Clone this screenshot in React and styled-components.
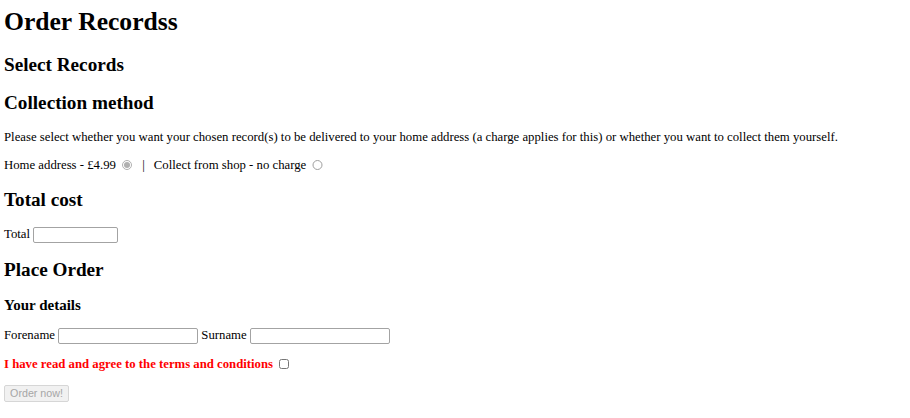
import * as React from 'react';
import styled, { createGlobalStyle } from 'styled-components';

const GlobalStyle = createGlobalStyle`
  body {
    margin: 0;
    background: #fff;
    color: #000;
    font-family: "Liberation Serif", "Times New Roman", serif;
  }
`;

function App() {
  const [method, setMethod] = React.useState('home');
  const [agreed, setAgreed] = React.useState(false);

  return (
    <>
      <GlobalStyle />
      <Page>
        <Title>Order Recordss</Title>
        <Heading>Select Records</Heading>

        <Heading>Collection method</Heading>
        <Text>
          Please select whether you want your chosen record(s) to be delivered to your home
          address (a charge applies for this) or whether you want to collect them yourself.
        </Text>
        <Text>
          Home address - £4.99
          <Radio
            name="collection"
            checked={method === 'home'}
            onChange={() => setMethod('home')}
          />
          <Divider>|</Divider>
          Collect from shop - no charge
          <Radio
            name="collection"
            checked={method === 'shop'}
            onChange={() => setMethod('shop')}
          />
        </Text>

        <Heading>Total cost</Heading>
        <FieldRow>
          Total <TextInput $width={85} readOnly />
        </FieldRow>

        <Heading>Place Order</Heading>
        <SubHeading>Your details</SubHeading>
        <FieldRow>
          Forename <TextInput $width={140} /> Surname <TextInput $width={140} />
        </FieldRow>
        <Terms>
          I have read and agree to the terms and conditions
          <Checkbox checked={agreed} onChange={(e) => setAgreed(e.target.checked)} />
        </Terms>
        <Text>
          <OrderButton disabled={!agreed}>Order now!</OrderButton>
        </Text>
      </Page>
    </>
  );
}

const Page = styled.div`
  display: flow-root;
  padding: 7px 4px 0;
`;

const Title = styled.h1`
  font-size: 25.6px;
  font-weight: bold;
  margin: 0 0 17px;
`;

const Heading = styled.h2`
  font-size: 19.2px;
  font-weight: bold;
  margin: 16px 0;
`;

const SubHeading = styled.h3`
  font-size: 15px;
  font-weight: bold;
  margin: 14px 0;
`;

const Text = styled.p`
  font-size: 12.75px;
  margin: 12.8px 0;
`;

const FieldRow = styled(Text)`
  line-height: 15px;
`;

const Terms = styled(Text)`
  color: #ff0000;
  font-weight: bold;
`;

const Divider = styled.span`
  color: #000;
  margin: 0 9px 0 7px;
`;

const TextInput = styled.input.attrs({ type: 'text' })`
  box-sizing: border-box;
  width: ${(p) => p.$width}px;
  height: 16px;
  padding: 1px 2px;
  border: 1px solid #a3a3a3;
  border-radius: 2px;
  font-size: 10.7px;
  vertical-align: middle;
  margin: 0;
`;

const Radio = styled.input.attrs({ type: 'radio' })`
  width: 10.4px;
  height: 10.4px;
  margin: 0 3px 2px 6px;
  vertical-align: middle;
  accent-color: #8f8f8f;
  opacity: 0.7;
`;

const Checkbox = styled.input.attrs({ type: 'checkbox' })`
  width: 10.4px;
  height: 10.4px;
  margin: 0 3px 2px 6px;
  vertical-align: middle;
`;

const OrderButton = styled.button`
  box-sizing: border-box;
  width: 65px;
  height: 17px;
  padding: 0 4px;
  font-family: Arial, "Liberation Sans", sans-serif;
  font-size: 10.7px;
  color: #a6a6a6;
  background: #f1f1f1;
  border: 1px solid #d6d6d6;
  border-radius: 2px;
`;

export default App;
